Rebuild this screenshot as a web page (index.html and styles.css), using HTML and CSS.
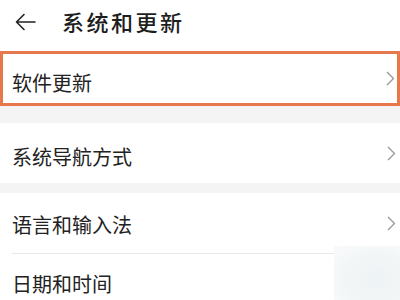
FILE: index.html
```html
<!DOCTYPE html>
<html lang="zh-CN">
<head>
<meta charset="utf-8">
<title>系统和更新</title>
<link rel="stylesheet" href="styles.css">
</head>
<body>
<div class="screen">
  <header class="header">
    <svg class="back" width="21" height="18" viewBox="0 0 21 18" aria-hidden="true">
      <path d="M20 9H1.5M9 1.5L1.5 9L9 16.5" fill="none" stroke="#222" stroke-width="1.6" stroke-linecap="round" stroke-linejoin="round"/>
    </svg>
    <h1 class="title">系统和更新</h1>
  </header>

  <section class="group">
    <div class="row row-highlight">
      <span class="label">软件更新</span>
      <svg class="chev" width="9" height="15" viewBox="0 0 9 15" aria-hidden="true"><path d="M1 1l6.5 6.5L1 14" fill="none" stroke="#9a9a9a" stroke-width="1.4" stroke-linejoin="round"/></svg>
    </div>
  </section>

  <section class="group group-gap-lg">
    <div class="row">
      <span class="label">系统导航方式</span>
      <svg class="chev" width="9" height="15" viewBox="0 0 9 15" aria-hidden="true"><path d="M1 1l6.5 6.5L1 14" fill="none" stroke="#9a9a9a" stroke-width="1.4" stroke-linejoin="round"/></svg>
    </div>
  </section>

  <section class="group group-gap-sm">
    <div class="row">
      <span class="label label-mid">语言和输入法</span>
      <svg class="chev" width="9" height="15" viewBox="0 0 9 15" aria-hidden="true"><path d="M1 1l6.5 6.5L1 14" fill="none" stroke="#9a9a9a" stroke-width="1.4" stroke-linejoin="round"/></svg>
    </div>
    <div class="line"></div>
    <div class="row row-last">
      <span class="label label-flat">日期和时间</span>
    </div>
  </section>

  <div class="smudge"></div>
</div>
</body>
</html>
```

FILE: styles.css
```css
* { box-sizing: border-box; margin: 0; padding: 0; }

html, body {
  width: 400px;
  height: 300px;
  overflow: hidden;
  background: #f4f4f4;
}

body {
  font-family: "Noto Sans CJK SC", "Noto Sans", "Liberation Sans", sans-serif;
  color: #222;
}

.screen {
  position: relative;
  width: 400px;
  height: 300px;
  overflow: hidden;
}

.header {
  height: 51px;
  background: #fff;
  display: flex;
  align-items: flex-start;
  padding: 11px 0 0 15px;
  gap: 26px;
}

.back { margin-top: 2px; flex: none; }

.title {
  font-size: 22px;
  line-height: 22px;
  font-weight: 500;
  letter-spacing: 2.5px;
  color: #1e1e1e;
  margin-top: -1px;
}

.group { background: #fff; }
.group-gap-lg { margin-top: 17px; }
.group-gap-sm { margin-top: 10px; }

.row {
  height: 60px;
  display: flex;
  align-items: center;
  justify-content: space-between;
  padding: 0 4px 0 12px;
}

.row-last { height: 46px; align-items: flex-start; padding-top: 20px; }

.row-highlight {
  height: 55px;
  border: 3px solid #e6784b;
  padding: 0 2px 0 9px;
}

.label {
  font-size: 20px;
  line-height: 20px;
  margin-top: 8px;
  color: #222;
}

.label-mid { margin-top: 4px; }
.label-flat { margin-top: 0; }

.chev { flex: none; }

.line {
  height: 1px;
  margin: 0 12px;
  background: #e8e8e8;
}

.smudge {
  position: absolute;
  left: 334px;
  top: 246px;
  width: 70px;
  height: 60px;
  background: radial-gradient(ellipse at 60% 55%, #edf2f4 0%, #f3f6f7 55%, #f9fbfb 100%);
}
```
